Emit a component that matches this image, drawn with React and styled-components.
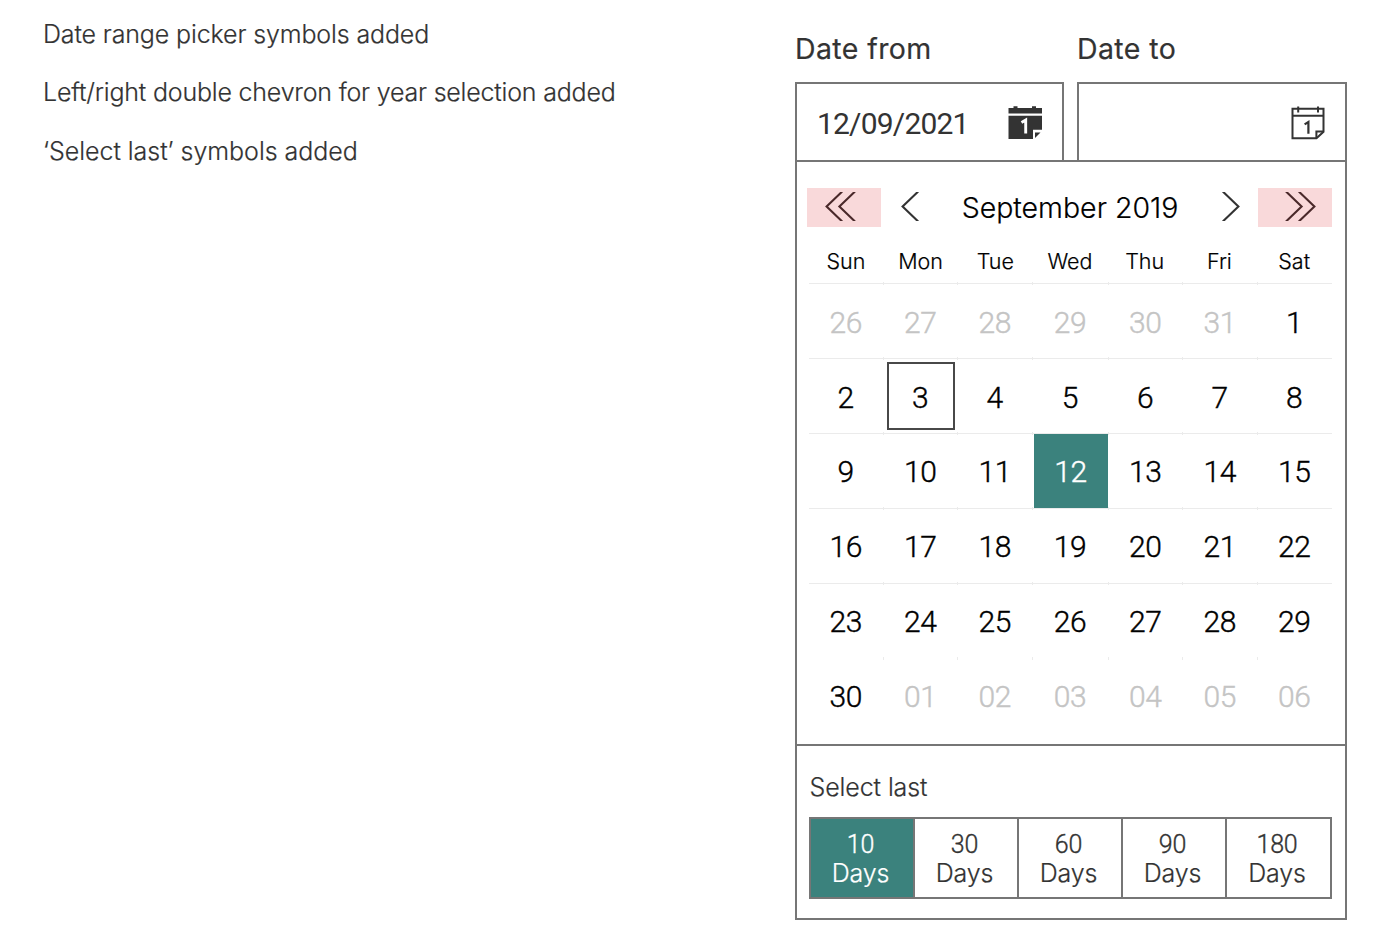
import React from "react";
import styled, { createGlobalStyle, css } from "styled-components";

const GlobalStyle = createGlobalStyle`
  *, *::before { box-sizing: border-box; }
  body {
    margin: 0;
    background: #fff;
    color: #333;
    font-family: Inter, "Liberation Sans", sans-serif;
    font-weight: 300;
    -webkit-text-stroke: 0.2px currentColor;
  }
  button { font: inherit; color: inherit; background: none; border: 0; padding: 0; margin: 0; }
`;

const line = "#767676";
const teal = "#3b827d";
const digits = `Roboto, "Liberation Sans", sans-serif`;

const Page = styled.main`
  display: flex;
  justify-content: space-between;
  width: 1380px;
  height: 950px;
  padding: 19px 33px 0 43px;
`;

const Notes = styled.section`
  display: flex;
  flex-direction: column;
  gap: 28.4px;
`;

const Note = styled.p`
  margin: 0;
  font-size: 25px;
  line-height: 30px;
  letter-spacing: ${(p) => p.$spacing}px;
  white-space: nowrap;
`;

const Picker = styled.section`
  width: 552px;
  padding-top: 13px;
`;

const Fields = styled.div`
  display: grid;
  grid-template-columns: 269px 270px;
  column-gap: 13px;
`;

const Field = styled.label`
  display: flex;
  flex-direction: column;
`;

const FieldLabel = styled.span`
  height: 50px;
  line-height: 34px;
  font-size: 28.5px;
  font-weight: 400;
  letter-spacing: 0.4px;
`;

const FieldBox = styled.span`
  display: flex;
  align-items: center;
  justify-content: space-between;
  height: 80px;
  padding: 0 18px 0 20px;
  border: 2px solid ${line};
`;

const FieldValue = styled.span`
  font-family: ${digits};
  font-size: 30px;
  line-height: 36px;
  font-weight: 400;
  letter-spacing: -0.8px;
  padding-top: 3px;
  -webkit-text-stroke: 0;
`;

const CalendarSvg = styled.svg`
  display: block;
  width: 36px;
  height: 34px;
  margin-top: 1px;
`;

const Panel = styled.div`
  margin-top: -2px;
  border: 2px solid ${line};
`;

const Calendar = styled.div`
  height: 582px;
  padding: 26px 13px 0 10px;
`;

const Header = styled.header`
  display: grid;
  grid-template-columns: 74px 60px 1fr 60px 74px;
  height: 39px;
`;

const NavButton = styled.button`
  display: flex;
  align-items: center;
  justify-content: center;
  height: 39px;
  ${(p) => p.$year && css`
    background: #f9d9da;
    color: #4a292a;
  `}
`;

const ChevronSvg = styled.svg`
  display: block;
  width: ${(p) => p.$width}px;
  height: 29px;
  margin: 0 ${(p) => p.$right || 0}px 2px ${(p) => p.$left || 0}px;
`;

const Month = styled.h2`
  margin: 0;
  padding: 1px 0 0 1px;
  text-align: center;
  color: #000;
  font-size: 28.5px;
  line-height: 38px;
  font-weight: 300;
  white-space: nowrap;
`;

const Weekdays = styled.div`
  display: grid;
  grid-template-columns: repeat(7, 1fr);
  height: 56px;
  margin-left: 2px;
`;

const Weekday = styled.span`
  padding: 19px 1px 0 0;
  text-align: center;
  color: #000;
  font-size: 21.5px;
  line-height: 30px;
`;

const Days = styled.div`
  display: grid;
  grid-template-columns: repeat(7, 1fr);
  grid-auto-rows: 75px;
  margin-left: 2px;
`;

const Day = styled.div`
  position: relative;
  display: flex;
  align-items: center;
  justify-content: center;
  border-top: 1px solid ${(p) => (p.$lastRow ? "transparent" : "#ebebeb")};
  padding: ${(p) => (p.$low ? 3 : 1)}px 1px 0 0;
  color: ${(p) => (p.$muted ? "#c4c4c4" : "#000")};
  font-family: ${digits};
  font-size: 30px;
  line-height: 36px;
  letter-spacing: -0.3px;
  -webkit-text-stroke: 0.4px currentColor;

  &:not(:nth-child(7n + 1))::before {
    content: "";
    position: absolute;
    left: -1px;
    top: -2px;
    width: 1px;
    height: 3px;
    background: #ebebeb;
  }
`;

const Today = styled.span`
  display: flex;
  align-items: center;
  justify-content: center;
  width: 68px;
  height: 68px;
  margin: -3px 0 0 1px;
  padding: 3px 1px 0 0;
  border: 2px solid #484848;
`;

const Selected = styled.span`
  display: flex;
  align-items: center;
  justify-content: center;
  width: 74px;
  height: 74px;
  margin: -1px 0 0 1px;
  padding-top: 1px;
  flex: none;
  background: ${teal};
  color: #fff;
`;

const Presets = styled.div`
  height: 174px;
  padding: 26px 13px 0 12px;
  border-top: 2px solid ${line};
`;

const PresetsLabel = styled.div`
  height: 45px;
  padding-left: 0.5px;
  font-size: 25px;
  line-height: 30px;
  letter-spacing: -0.1px;
`;

const PresetGroup = styled.div`
  display: grid;
  grid-template-columns: 102px repeat(3, 104px) 105px;
  width: 523px;
  height: 82px;
  border: 2px solid ${line};
`;

const Preset = styled.button`
  display: flex;
  flex-direction: column;
  align-items: center;
  padding: 10px 3px 0 0;
  font-size: 25px;
  line-height: 29px;
  background: ${(p) => (p.$active ? teal : "#fff")};
  color: ${(p) => (p.$active ? "#fff" : "#333")};

  & + & { border-left: 2px solid ${line}; }
`;

const PresetCount = styled.span`
  font-family: ${digits};
  padding-top: 1px;
  letter-spacing: -0.2px;
  -webkit-text-stroke: 0.35px currentColor;
`;

const PresetUnit = styled.span`
  letter-spacing: -0.2px;
`;

function CalendarIcon({ solid }) {
  return (
    <CalendarSvg viewBox="0 0 36 34" fill="none" aria-hidden="true">
      {solid ? (
        <>
          <path d="M.5 2h5V.3h4V2H24V.3h4V2h6v5.5H.5Z" fill="#333" />
          <path d="M.5 9.8H34v14h-9v9.2H.5Z" fill="#333" />
          <path d="M27 26.5h5.5L27 32Z" fill="#333" />
          <path d="M13.5 16.4 17.7 14v13.6" stroke="#fff" strokeWidth="2.9" />
        </>
      ) : (
        <>
          <path d="M1.5 2.7h31v23l-7 6.6h-24Z M1.5 9.7h31" stroke="#333" strokeWidth="2" />
          <path d="M7.2.5v6M27 .5v6" stroke="#333" strokeWidth="2" />
          <path d="M25.4 32v-6.5h7" stroke="#333" strokeWidth="2" />
          <path d="M13.6 18.4 17.4 16v11.8" stroke="#333" strokeWidth="2.2" />
        </>
      )}
    </CalendarSvg>
  );
}

function Chevron({ flip, double, ...rest }) {
  const w = double ? 31 : 18;
  return (
    <ChevronSvg $width={w} viewBox={`0 0 ${w} 29`} fill="none" stroke="currentColor" strokeWidth="2.1" aria-hidden="true" {...rest}>
      <g transform={flip ? `translate(${w} 0) scale(-1 1)` : undefined}>
        <path d="M17.2-.5 1.6 14.5l15.6 15" />
        {double && <path d="M30-.5 14.4 14.5l15.6 15" />}
      </g>
    </ChevronSvg>
  );
}

const weekdays = ["Sun", "Mon", "Tue", "Wed", "Thu", "Fri", "Sat"];
const days = [
  ...["26", "27", "28", "29", "30", "31"].map((label) => ({ label, muted: true })),
  ...Array.from({ length: 30 }, (_, i) => ({ label: String(i + 1) })),
  ...["01", "02", "03", "04", "05", "06"].map((label) => ({ label, muted: true })),
];
const presets = [10, 30, 60, 90, 180];

function DayCell({ day, index }) {
  let content = day.label;
  if (!day.muted && day.label === "3") content = <Today>3</Today>;
  if (!day.muted && day.label === "12") content = <Selected>12</Selected>;
  return (
    <Day $muted={day.muted} $low={index < 14} $lastRow={index >= 35}>{content}</Day>
  );
}

export default function App() {
  return (
    <>
      <GlobalStyle />
      <Page>
        <Notes>
          <Note $spacing={-0.13}>Date range picker symbols added</Note>
          <Note $spacing={-0.2}>Left/right double chevron for year selection added</Note>
          <Note $spacing={-0.04}>‘Select last’ symbols added</Note>
        </Notes>
        <Picker>
          <Fields>
            <Field>
              <FieldLabel>Date from</FieldLabel>
              <FieldBox>
                <FieldValue>12/09/2021</FieldValue>
                <CalendarIcon solid />
              </FieldBox>
            </Field>
            <Field>
              <FieldLabel>Date to</FieldLabel>
              <FieldBox>
                <FieldValue />
                <CalendarIcon />
              </FieldBox>
            </Field>
          </Fields>
          <Panel>
            <Calendar>
              <Header>
                <NavButton $year aria-label="Previous year"><Chevron double $right={7} /></NavButton>
                <NavButton aria-label="Previous month"><Chevron $right={2} /></NavButton>
                <Month>September 2019</Month>
                <NavButton aria-label="Next month"><Chevron flip $left={6} /></NavButton>
                <NavButton $year aria-label="Next year"><Chevron double flip $left={10} /></NavButton>
              </Header>
              <Weekdays>
                {weekdays.map((name) => <Weekday key={name}>{name}</Weekday>)}
              </Weekdays>
              <Days>
                {days.map((day, index) => <DayCell key={index} day={day} index={index} />)}
              </Days>
            </Calendar>
            <Presets>
              <PresetsLabel>Select last</PresetsLabel>
              <PresetGroup>
                {presets.map((count) => (
                  <Preset key={count} $active={count === 10}>
                    <PresetCount>{count}</PresetCount>
                    <PresetUnit>Days</PresetUnit>
                  </Preset>
                ))}
              </PresetGroup>
            </Presets>
          </Panel>
        </Picker>
      </Page>
    </>
  );
}
